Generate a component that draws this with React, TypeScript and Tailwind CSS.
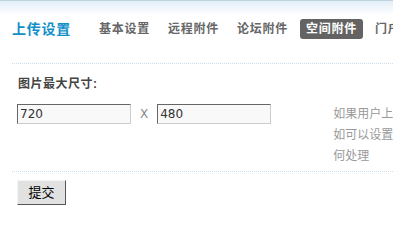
const navItems = ['基本设置', '远程附件', '论坛附件', '空间附件', '门户附件'];

const tips = [
  '如果用户上传的图片超过此尺寸，系统将自动缩小',
  '如可以设置为 0 ，则表示不限制，由服务器决定如',
  '何处理',
];

export default function App() {
  return (
    <div className="h-[207px] w-[393px] overflow-hidden bg-white font-['Liberation_Sans','Noto_Sans_CJK_SC',sans-serif]">
      <div className="border-t border-[#bcd3e0] bg-[linear-gradient(to_bottom,#e3eef7,#ffffff_14px)]">
        <div className="ml-[12px] flex h-[63px] items-start border-b border-dotted border-[#c9dfec] pt-[18px]">
          <div className="flex h-[20px] items-center whitespace-nowrap">
            <h1 className="text-[14px] font-bold leading-[20px] tracking-[0.75px] text-[#1190c8]">上传设置</h1>
            <nav className="ml-[22px] flex items-center gap-[6px]">
              {navItems.map((item) => (
                <span
                  key={item}
                  className={
                    item === '空间附件'
                      ? 'rounded-[3px] bg-[#636363] px-[6px] text-[12px] font-bold leading-[20px] tracking-[0.75px] text-white'
                      : 'px-[6px] text-[12px] font-bold leading-[20px] tracking-[0.75px] text-[#666666]'
                  }
                >
                  {item}
                </span>
              ))}
            </nav>
          </div>
        </div>
      </div>

      <div className="ml-[12px] border-b border-dotted border-[#c9dfec] pb-[4px] pl-[5px]">
        <p className="mt-[12px] pl-[1px] text-[12px] font-bold leading-[16px] tracking-[0.5px] text-[#444444]">
          图片最大尺寸:
        </p>
        <div className="mt-[12px] flex items-start whitespace-nowrap">
          <input
            readOnly
            value="720"
            className="h-[20px] w-[114px] border border-b-[#cccccc] border-l-[#666666] border-r-[#cccccc] border-t-[#666666] bg-[#f9f9f9] px-[2px] font-['DejaVu_Sans',sans-serif] text-[12px] text-[#333333] outline-none"
          />
          <span className="mx-[9px] font-['DejaVu_Sans',sans-serif] text-[12px] leading-[20px] text-[#888888]">X</span>
          <input
            readOnly
            value="480"
            className="h-[20px] w-[114px] border border-b-[#cccccc] border-l-[#666666] border-r-[#cccccc] border-t-[#666666] bg-[#f9f9f9] px-[2px] font-['DejaVu_Sans',sans-serif] text-[12px] text-[#333333] outline-none"
          />
          <div className="ml-[62px] text-[12px] leading-[21px] text-[#999999]">
            {tips.map((line) => (
              <div key={line}>{line}</div>
            ))}
          </div>
        </div>
      </div>

      <div className="ml-[12px] pl-[5px] pt-[8px]">
        <button
          type="button"
          className="h-[25px] w-[49px] border border-b-[#555555] border-l-[#f4f4f4] border-r-[#555555] border-t-[#f4f4f4] bg-[#e1e1e1] text-[13px] leading-[23px] text-black"
        >
          提交
        </button>
      </div>
    </div>
  );
}
